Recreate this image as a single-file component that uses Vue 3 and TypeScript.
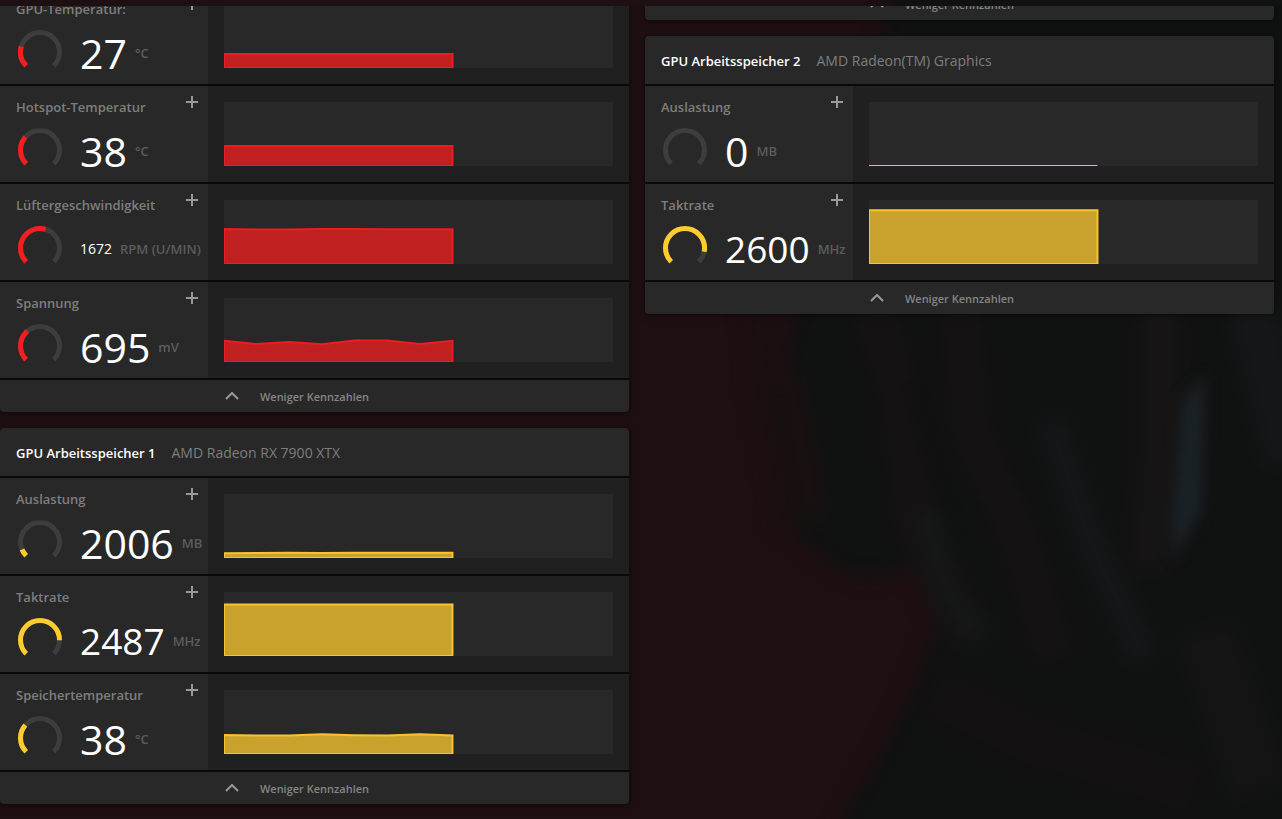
<script setup lang="ts">
type Tone = 'red' | 'gold'
type Size = 'large' | 'medium' | 'small'

interface Metric {
  label: string
  value: string
  unit: string
  size: Size
  load: number
  history: number[]
}

interface Card {
  title?: string
  device?: string
  tone: Tone
  metrics: Metric[]
}

const CHART_WIDTH = 389
const CHART_HEIGHT = 64
const SAMPLE_STEP = 32.64
const GAUGE_LENGTH = 91.9

const flat = (height: number): number[] => Array(8).fill(height)

const columns: Card[][] = [
  [
    {
      tone: 'red',
      metrics: [
        { label: 'GPU-Temperatur:', value: '27', unit: '°C', size: 'large', load: 0.225, history: flat(14) },
        { label: 'Hotspot-Temperatur', value: '38', unit: '°C', size: 'large', load: 0.317, history: flat(20) },
        { label: 'Lüftergeschwindigkeit', value: '1672', unit: 'RPM (U/MIN)', size: 'small', load: 0.557, history: [35, 34.5, 34.5, 35, 35, 34.7, 34.7, 34.7] },
        { label: 'Spannung', value: '695', unit: 'mV', size: 'large', load: 0.348, history: [21.3, 18, 20, 17.8, 21.5, 21.5, 18, 21.2] },
      ],
    },
    {
      title: 'GPU Arbeitsspeicher 1',
      device: 'AMD Radeon RX 7900 XTX',
      tone: 'gold',
      metrics: [
        { label: 'Auslastung', value: '2006', unit: 'MB', size: 'large', load: 0.082, history: [4.7, 5, 5.2, 5, 5.2, 5.2, 5.2, 5.2] },
        { label: 'Taktrate', value: '2487', unit: 'MHz', size: 'medium', load: 0.829, history: flat(51.5) },
        { label: 'Speichertemperatur', value: '38', unit: '°C', size: 'large', load: 0.317, history: [19, 18.5, 18.5, 19.8, 18.8, 18.5, 19.8, 18.5] },
      ],
    },
  ],
  [
    { tone: 'gold', metrics: [] },
    {
      title: 'GPU Arbeitsspeicher 2',
      device: 'AMD Radeon(TM) Graphics',
      tone: 'gold',
      metrics: [
        { label: 'Auslastung', value: '0', unit: 'MB', size: 'large', load: 0, history: flat(0) },
        { label: 'Taktrate', value: '2600', unit: 'MHz', size: 'medium', load: 0.867, history: flat(53.8) },
      ],
    },
  ],
]

function chartPoints(history: number[]): string {
  const top = history.map((height, i) => `${i * SAMPLE_STEP},${CHART_HEIGHT - height}`)
  const end = (history.length - 1) * SAMPLE_STEP
  return [`0,${CHART_HEIGHT}`, ...top, `${end},${CHART_HEIGHT}`].join(' ')
}

function gaugeDash(load: number): string {
  return `${load * GAUGE_LENGTH} ${GAUGE_LENGTH * 2}`
}
</script>

<template>
  <div class="page">
    <svg class="backdrop" viewBox="0 0 1282 819" preserveAspectRatio="none" aria-hidden="true">
      <defs>
        <filter id="soft" x="-50%" y="-20%" width="200%" height="140%" color-interpolation-filters="sRGB">
          <feGaussianBlur stdDeviation="7" />
        </filter>
        <filter id="softer" filterUnits="userSpaceOnUse" x="600" y="0" width="682" height="819" color-interpolation-filters="sRGB">
          <feGaussianBlur stdDeviation="9" />
        </filter>
      </defs>
      <rect width="1282" height="819" fill="#1e0f12" />
      <g filter="url(#softer)">
        <path
          d="M900 -40 L880 40 L800 300 L775 400 L775 480 L800 540 L850 574 L885 574 L925 566 L944 580 L938 620 L912 690 L880 755 L815 870 H1340 V-40 Z"
          fill="#101111"
        />
        <path d="M757 300 L762 380 L778 450 L790 530" stroke="#19100f" stroke-width="22" fill="none" />
        <path d="M790 370 L802 440 L816 520" stroke="#1c1011" stroke-width="16" fill="none" />
        <path d="M870 300 L900 390 L915 520 L970 640" stroke="#151213" stroke-width="46" fill="none" />
        <path d="M960 300 L970 430 L1020 540 L1055 660" stroke="#151213" stroke-width="44" fill="none" />
        <path d="M915 380 L932 440 L965 560" stroke="#0f1010" stroke-width="20" fill="none" />
        <path d="M1050 420 L1090 540 L1145 660" stroke="#151617" stroke-width="28" fill="none" />
        <path d="M925 510 L945 590 L980 640" stroke="#151616" stroke-width="30" fill="none" />
        <path d="M1160 300 L1160 450 L1150 570" stroke="#161414" stroke-width="44" fill="none" />
        <path d="M1250 300 L1290 460" stroke="#151617" stroke-width="50" fill="none" />
        <path d="M930 690 L1030 740 L1200 790" stroke="#131112" stroke-width="60" fill="none" />
        <path d="M1205 630 L1260 790" stroke="#141414" stroke-width="60" fill="none" />
      </g>
      <path d="M1206 375 L1182 400 L1172 520 L1174 560 L1202 510 Z" fill="#1b2226" filter="url(#soft)" />
    </svg>

    <main class="viewport">
      <div class="columns">
        <div v-for="(cards, c) in columns" :key="c" class="column">
          <section v-for="(card, k) in cards" :key="k" class="card" :class="card.tone">
            <header v-if="card.title" class="card-header">
              <h2 class="card-title">{{ card.title }}</h2>
              <span class="card-device">{{ card.device }}</span>
            </header>

            <article v-for="metric in card.metrics" :key="metric.label" class="metric">
              <div class="info">
                <div class="info-head">
                  <h3 class="label">{{ metric.label }}</h3>
                  <button type="button" class="add" :aria-label="`${metric.label} hinzufügen`">
                    <svg width="12" height="12" viewBox="0 0 12 12"><path d="M6 0V12M0 6H12" /></svg>
                  </button>
                </div>
                <div class="reading">
                  <svg class="gauge" width="44" height="44" viewBox="0 0 44 44" aria-hidden="true">
                    <path class="track" d="M8.2 35.8A19.5 19.5 0 1 1 35.8 35.8" />
                    <path
                      v-if="metric.load > 0"
                      class="level"
                      d="M8.2 35.8A19.5 19.5 0 1 1 35.8 35.8"
                      :stroke-dasharray="gaugeDash(metric.load)"
                    />
                  </svg>
                  <span class="value" :class="metric.size">{{ metric.value }}</span>
                  <span class="unit">{{ metric.unit }}</span>
                </div>
              </div>
              <div class="plot">
                <svg class="chart" :viewBox="`0 0 ${CHART_WIDTH} ${CHART_HEIGHT}`" preserveAspectRatio="none" aria-hidden="true">
                  <polygon :points="chartPoints(metric.history)" />
                </svg>
              </div>
            </article>

            <button type="button" class="less">
              <svg class="chevron" width="14" height="8" viewBox="0 0 14 8"><path d="M1 7L7 1L13 7" /></svg>
              <span class="less-text">Weniger Kennzahlen</span>
            </button>
          </section>
        </div>
      </div>
    </main>
  </div>
</template>

<style>
body {
  margin: 0;
  background: #1e0f12;
}
</style>

<style scoped>
.page {
  position: relative;
  height: 100vh;
  box-sizing: border-box;
  padding-top: 6px;
  overflow: hidden;
  font-family: "Segoe UI", "Open Sans", "Noto Sans", sans-serif;
  font-size: 13px;
  line-height: 20px;
  color: #828282;
}

.backdrop {
  position: absolute;
  inset: 0;
  width: 100%;
  height: 100%;
}

.viewport {
  position: relative;
  height: 100%;
  overflow: hidden;
}

/* The list is scrolled part of the way into its first cards. */
.columns {
  display: grid;
  grid-template-columns: 1fr 1fr;
  gap: 16px;
  align-items: start;
  margin-top: -18px;
  padding-right: 8px;
}

.column {
  display: flex;
  flex-direction: column;
  gap: 16px;
  min-width: 0;
}

.card {
  display: flex;
  flex-direction: column;
  gap: 2px;
  border-radius: 4px;
  overflow: hidden;
  background: #0b0809;
  box-shadow: 0 1px 6px rgba(0, 0, 0, 0.5);
}

.red {
  --tone: #f71e1f;
  --line: #ed1c1f;
  --area: #c02020;
}

.gold {
  --tone: #ffcb2f;
  --line: #fac32e;
  --area: #c9a22d;
}

.card-header {
  display: flex;
  align-items: center;
  gap: 16px;
  box-sizing: border-box;
  height: 48px;
  padding: 2px 16px 0;
  background: #282828;
}

.card-title {
  margin: 0;
  font-size: 13px;
  font-weight: 600;
  color: #fff;
}

.card-device {
  font-size: 14px;
  font-weight: 500;
  color: #7e7e7e;
}

.metric {
  display: grid;
  grid-template-columns: 208px 1fr;
  height: 96px;
  background: #202020;
}

.info {
  background: #282828;
}

.info-head {
  display: flex;
  justify-content: space-between;
  height: 42px;
  padding-left: 16px;
}

.label {
  margin: 0;
  padding-top: 11px;
  font-size: 13px;
  font-weight: 600;
  color: #7e7e7e;
  white-space: nowrap;
}

.add {
  display: grid;
  place-items: center;
  width: 32px;
  height: 32px;
  padding: 0;
  border: 0;
  background: none;
  cursor: pointer;
}

.add path {
  stroke: #999;
  stroke-width: 2;
}

.reading {
  display: flex;
  align-items: center;
  height: 44px;
  padding-left: 18px;
  white-space: nowrap;
}

.gauge {
  flex: none;
  margin-right: 18px;
}

.gauge path {
  fill: none;
  stroke-width: 5;
}

.track {
  stroke: #3d3d3d;
}

.level {
  stroke: var(--tone);
}

.value {
  margin-right: 8px;
  padding-top: 2px;
  color: #fff;
}

.large {
  font-size: 41px;
  line-height: 44px;
}

.medium {
  font-size: 37px;
  line-height: 44px;
}

.small {
  font-size: 14px;
}

.unit {
  padding-top: 2px;
  font-weight: 600;
  color: #5c5c5c;
}

.plot {
  min-width: 0;
  padding: 16px;
}

.chart {
  display: block;
  width: 100%;
  height: 64px;
  overflow: hidden;
  background: #282828;
}

.chart polygon {
  fill: var(--area);
  stroke: var(--line);
  stroke-width: 2;
  vector-effect: non-scaling-stroke;
}

.less {
  display: grid;
  grid-template-columns: 1fr auto 1fr;
  align-items: center;
  column-gap: 21px;
  height: 32px;
  padding: 0;
  border: 0;
  background: #282828;
  font-family: inherit;
  font-size: 11px;
  font-weight: 600;
  line-height: 20px;
  color: #858585;
  cursor: pointer;
}

.less-text {
  padding-top: 2px;
}

.chevron {
  justify-self: end;
}

.chevron path {
  fill: none;
  stroke: #999;
  stroke-width: 2;
}
</style>
